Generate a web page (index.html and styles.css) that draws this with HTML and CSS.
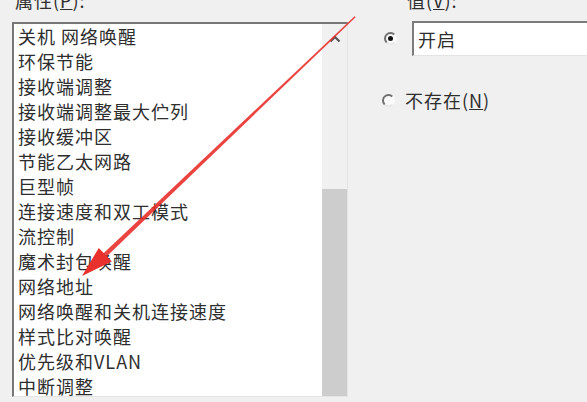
FILE: index.html
```html
<!DOCTYPE html>
<html lang="zh-CN">

<head>
    <meta charset="UTF-8">
    <meta name="viewport" content="width=device-width, initial-scale=1.0">
    <title>高级属性</title>
    <link rel="stylesheet" href="styles.css">
</head>

<body>

    <div class="dialog">
        <!-- Property list -->
        <div class="prop-col">
            <div class="label">属性(<u>P</u>):</div>
            <div class="listbox">
                <ul class="items">
                    <li>关机 网络唤醒</li>
                    <li>环保节能</li>
                    <li>接收端调整</li>
                    <li>接收端调整最大伫列</li>
                    <li>接收缓冲区</li>
                    <li>节能乙太网路</li>
                    <li>巨型帧</li>
                    <li>连接速度和双工模式</li>
                    <li>流控制</li>
                    <li>魔术封包唤醒</li>
                    <li>网络地址</li>
                    <li>网络唤醒和关机连接速度</li>
                    <li>样式比对唤醒</li>
                    <li>优先级和VLAN</li>
                    <li>中断调整</li>
                </ul>
                <div class="scrollbar">
                    <div class="scroll-up">
                        <svg width="12" height="8" viewBox="0 0 12 8">
                            <path d="M1.5 6.5 L6 2 L10.5 6.5" fill="none" stroke="#555" stroke-width="2.2"/>
                        </svg>
                    </div>
                    <div class="thumb"></div>
                </div>
            </div>
        </div>

        <!-- Value column -->
        <div class="value-col">
            <div class="label value-label">值(<u>V</u>):</div>
            <div class="option first">
                <span class="radio checked"></span>
                <div class="textbox">开启</div>
            </div>
            <div class="option">
                <span class="radio"></span>
                <span class="option-text">不存在(<u>N</u>)</span>
            </div>
        </div>
    </div>

    <!-- Red annotation arrow over the list -->
    <svg class="arrow" width="587" height="402" viewBox="0 0 587 402">
        <polygon points="106.8,256.3 103.8,253.1 354.6,16.2 355.6,17.2" fill="#e8302c" opacity="0.9"/>
        <polygon points="82,276 98.8,247.9 111.8,261.5" fill="#e8302c"/>
    </svg>

</body>

</html>
```

FILE: styles.css
```css
/* Page */
body {
    margin: 0;
    padding: 0;
    width: 587px;
    height: 402px;
    overflow: hidden;
    background-color: #f0f0f0;
    font-family: "Noto Sans CJK SC", "Noto Sans", sans-serif;
    font-size: 18px;
    letter-spacing: 1px;
    color: #2e2e2e;
    position: relative;
}

.dialog {
    display: flex;
    padding-left: 12px;
}

.label {
    height: 22px;
    line-height: 22px;
    margin-top: -11px;
    margin-bottom: 11px;
    padding-left: 3px;
    white-space: nowrap;
}

/* Listbox */
.prop-col {
    width: 336px;
}

.listbox {
    display: flex;
    height: 375px;
    box-sizing: border-box;
    background-color: #fff;
    border-top: 2px solid #777;
    border-left: 2px solid #777;
    border-right: 1px solid #e4e4e4;
    border-bottom: 1px solid #e4e4e4;
}

.items {
    flex: 1;
    list-style: none;
    margin: 0;
    padding: 0 0 0 4px;
    overflow: hidden;
}

.items li {
    height: 25px;
    line-height: 25px;
    white-space: nowrap;
}

.scrollbar {
    width: 25px;
    background-color: #f0f0f0;
    display: flex;
    flex-direction: column;
    justify-content: space-between;
}

.scroll-up {
    height: 30px;
    display: flex;
    justify-content: center;
    align-items: center;
}

.thumb {
    height: 207px;
    background-color: #cdcdcd;
}

/* Value column */
.value-col {
    margin-left: 36px;
    flex: 1;
}

.value-label {
    padding-left: 23px;
}

.option {
    display: flex;
    align-items: center;
}

.option.first {
    margin-top: -1px;
    margin-bottom: 34px;
}

.radio {
    width: 13px;
    height: 13px;
    box-sizing: border-box;
    border-radius: 50%;
    background-color: #fafafa;
    border: 2px solid #6e6e6e;
    border-right-color: #fafafa;
    border-bottom-color: #e8e8e8;
    position: relative;
    flex-shrink: 0;
}

.radio.checked::after {
    content: "";
    position: absolute;
    left: 2px;
    top: 2px;
    width: 5px;
    height: 5px;
    border-radius: 50%;
    background-color: #111;
}

.textbox {
    margin-left: 15px;
    flex: 1;
    height: 35px;
    line-height: 33px;
    box-sizing: border-box;
    padding-left: 4px;
    background-color: #fff;
    border-top: 2px solid #7c7c7c;
    border-left: 2px solid #7c7c7c;
    border-bottom: 1px solid #e4e4e4;
}

.option-text {
    margin-left: 10px;
    line-height: 20px;
}

.option:not(.first) .radio {
    margin-left: -2px;
}

.arrow {
    position: absolute;
    left: 0;
    top: 0;
    pointer-events: none;
}
```
